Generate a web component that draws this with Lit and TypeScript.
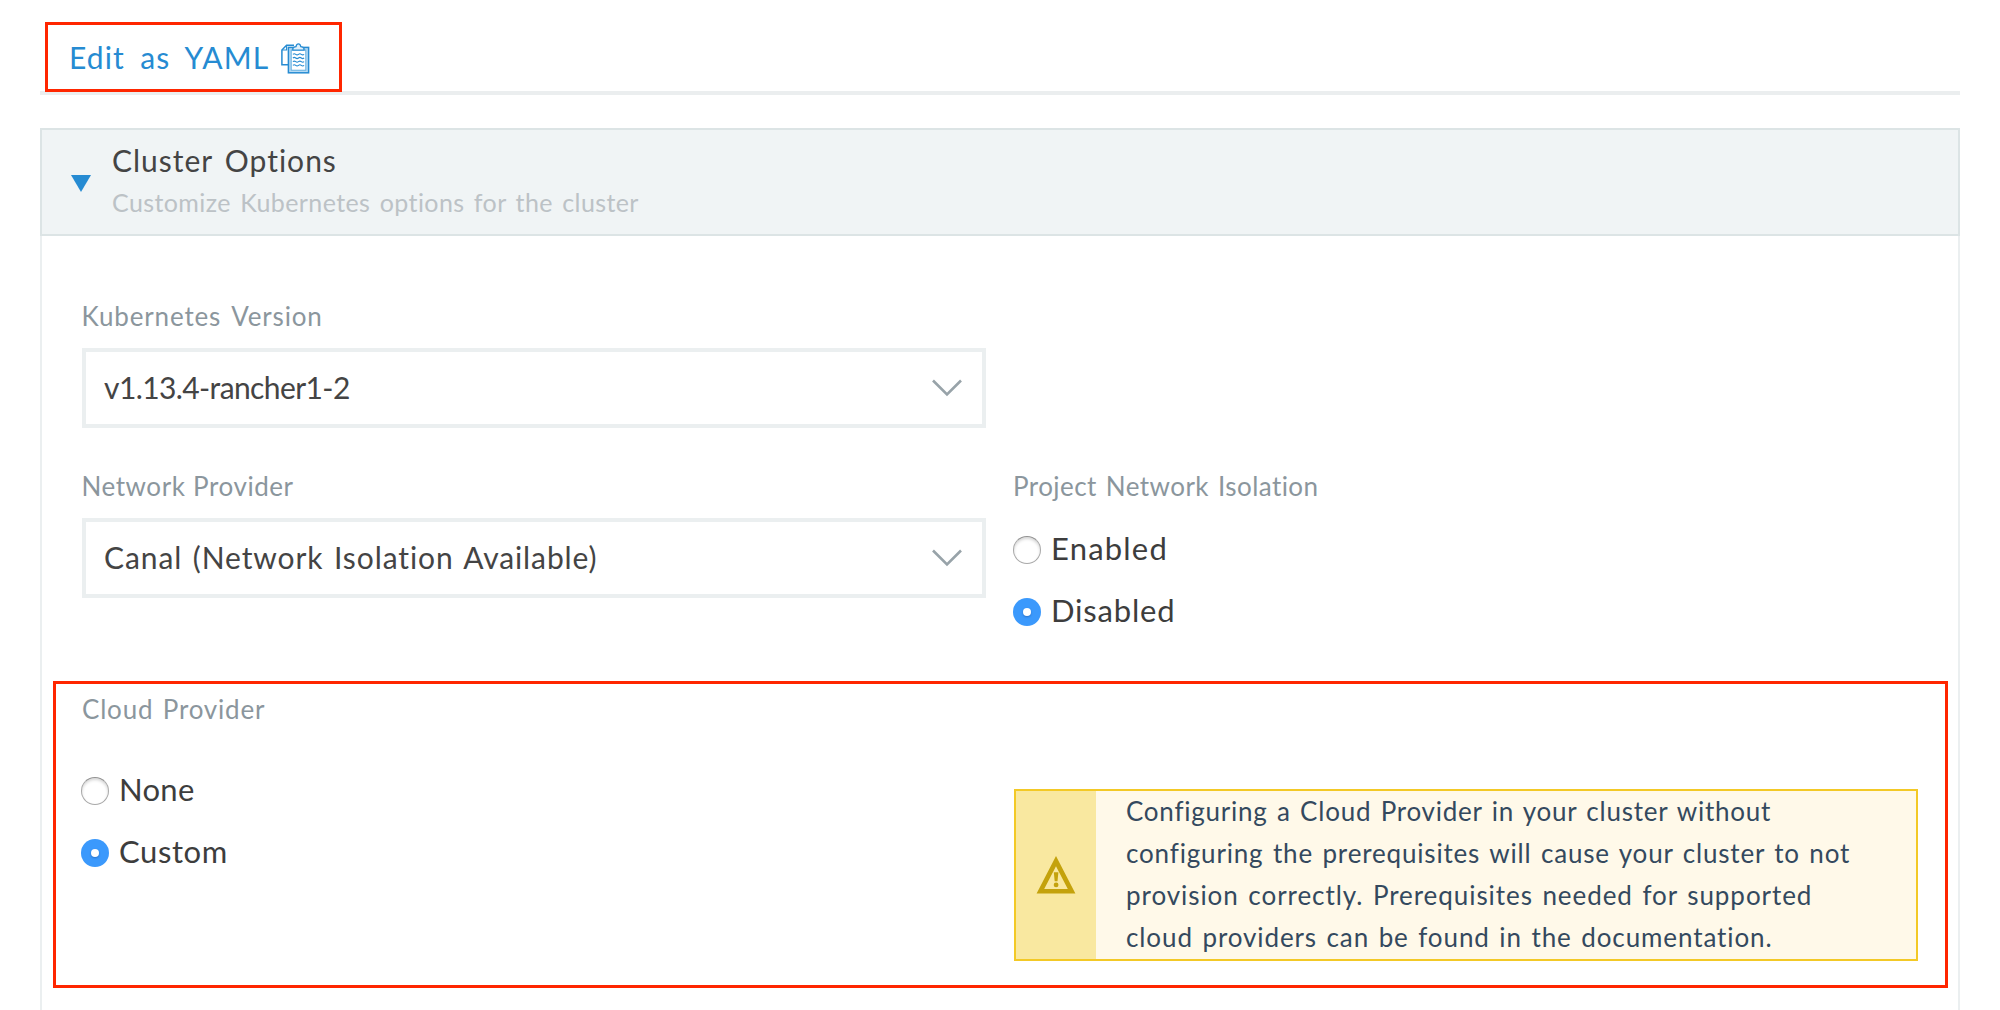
import { LitElement, html, css, svg } from "lit";
import { customElement, property } from "lit/decorators.js";

@customElement("select-box")
class SelectBox extends LitElement {
  static styles = css`
    :host { display: block; }
    .box {
      box-sizing: border-box; height: 80px; border: 4px solid #ebeff0;
      display: flex; align-items: center; justify-content: space-between;
      padding: 0 20px 0 18px; background: #fff;
      font-size: 30px; line-height: 42px; color: #444;
    }
    .value { padding-bottom: 3px; }
    svg { display: block; }
  `;
  render() {
    return html`<div class="box">
      <span class="value"><slot></slot></span>
      <svg width="30" height="18" viewBox="0 0 30 18">
        <path d="M1 1.5 L15 15.5 L29 1.5" fill="none" stroke="#98a3a9" stroke-width="2.6" />
      </svg>
    </div>`;
  }
}

@customElement("radio-option")
class RadioOption extends LitElement {
  @property({ type: Boolean }) checked = false;
  static styles = css`
    :host { display: flex; align-items: center; height: 62px; gap: 10px; font-size: 31px; line-height: 62px; color: #3d3d3d; }
    .text { padding-top: 1px; }
    .dot {
      box-sizing: border-box; width: 28px; height: 28px; border-radius: 50%; margin-top: 6px;
      border: 1px solid #a9a9a9; border-top-color: #929292; background: #fff;
      box-shadow: inset 0 2px 3px rgba(0, 0, 0, 0.16);
      display: flex; align-items: center; justify-content: center;
    }
    .dot.on { border: 0; background: #3b99fc; box-shadow: none; }
    .dot.on::after {
      content: ""; width: 8px; height: 8px; border-radius: 50%; background: #fff;
      box-shadow: 0 1px 2px rgba(0, 40, 110, 0.35);
    }
  `;
  render() {
    return html`<span class="dot ${this.checked ? "on" : ""}"></span><span class="text"><slot></slot></span>`;
  }
}

const clipboardIcon = svg`
  <svg class="clip" width="30" height="32" viewBox="0 0 30 32" fill="none" stroke="#268bd2">
    <path d="M7 21.8 H0.9 V7 L5.6 2.2 H13" stroke-width="1.5" />
    <path d="M1 7 H5.6 V2.4" stroke-width="1.1" />
    <rect x="7.4" y="4.4" width="20.2" height="25.4" fill="#b5daf4" stroke-width="1.5" />
    <rect x="10.2" y="7" width="14.6" height="20.2" fill="#fff" stroke="#5aa9de" stroke-width="0.9" />
    <path d="M11.8 7.2 V5.6 Q12.4 4 15 3.6 Q15.6 0.9 17.4 0.9 Q19.2 0.9 19.8 3.6 Q22.4 4 23 5.6 V7.2 Z" fill="#e3f1fb" stroke-width="1.3" />
    <path d="M11.9 11.3 q1.4 -1.2 2.8 0 t2.8 0 t2.8 0 t2.8 0 M11.9 15 q1.4 -1.2 2.8 0 t2.8 0 t2.8 0 t2.8 0 M11.9 18.7 q1.4 -1.2 2.8 0 t2.8 0 t2.8 0 t2.8 0 M11.9 22.4 q1.4 -1.2 2.8 0 t2.8 0 t2.8 0 t2.8 0" stroke-width="1.1" />
  </svg>`;

const warningIcon = svg`
  <svg width="40" height="38" viewBox="0 0 40 38">
    <path d="M20 0 L39.4 37.4 H0.6 Z M20 10.2 L8.2 33 H31.8 Z" fill="#c4a20c" fill-rule="evenodd" />
    <path d="M17.8 16.2 H22.4 L21.5 25.3 H18.7 Z" fill="#c4a20c" />
    <circle cx="20.1" cy="28.9" r="2.4" fill="#c4a20c" />
  </svg>`;

@customElement("app-root")
class AppRoot extends LitElement {
  static styles = css`
    :host {
      display: block; height: 1010px; overflow: hidden; background: #fff;
      font-family: Lato, "Open Sans", sans-serif; white-space: nowrap;
    }
    .page { display: flex; flex-direction: column; height: 1010px; padding: 0 40px; box-sizing: border-box; }
    .toolbar { flex: none; box-sizing: border-box; height: 95px; border-bottom: 4px solid #ebeeef; padding: 22px 0 0 5px; }
    .edit {
      box-sizing: border-box; width: 297px; height: 70px; border: 3px solid #ff2600;
      display: flex; align-items: center; gap: 12px; padding-left: 21px; position: relative;
      font-size: 30px; line-height: 42px; color: #268bd2;
    }
    .t-edit { letter-spacing: 1.1px; word-spacing: 6.6px; }
    .clip { display: block; margin-top: 4px; }
    .panel { flex: 1; display: flex; flex-direction: column; margin-top: 33px; min-height: 0; }
    .head {
      flex: none; box-sizing: border-box; height: 108px; background: #f0f4f5; border: 2px solid #dce4e5;
      display: flex; align-items: flex-start; padding: 9px 0 0 29px; gap: 21px;
    }
    .arrow { display: block; margin-top: 36px; }
    .title { font-size: 30px; line-height: 42px; color: #444; letter-spacing: 1px; word-spacing: 3.5px; }
    .sub { font-size: 25px; line-height: 42px; color: #bcc2c6; letter-spacing: 0.4px; word-spacing: 2.6px; }
    .body { flex: 1; border: solid #ebeff0; border-width: 0 2px; padding-top: 65px; }
    .form { display: grid; grid-template-columns: 904px 904px; column-gap: 27px; row-gap: 43px; padding-left: 40px; }
    .label { font-size: 26px; line-height: 30px; color: #8b969d; }
    .form select-box { margin-top: 17px; }
    .radios { margin-top: 15px; }
    .wide { grid-column: 1 / -1; width: 904px; }
    .cloud {
      box-sizing: border-box; width: 1895px; height: 307px; margin: 41px 0 0 11px;
      border: 3px solid #ff2600; padding: 10px 27px 0 25px;
    }
    .cols { display: grid; grid-template-columns: 933px 904px; margin-top: 33px; }
    .alert {
      box-sizing: border-box; height: 172px; margin-top: 32px; border: 2px solid #f3c926; background: #fff9e9;
      display: grid; grid-template-columns: 80px 1fr; font-size: 26px; line-height: 42px; color: #34495e;
    }
    .badge { background: #f9e8a0; display: flex; align-items: center; justify-content: center; }
    .msg { padding-left: 30px; margin-top: -1px; word-spacing: 2px; }
    .l1 { letter-spacing: 0.76px; }
    .l2 { letter-spacing: 0.83px; }
    .l3 { letter-spacing: 0.94px; }
    .l4 { letter-spacing: 0.9px; }
    .k-ver { letter-spacing: 0.85px; word-spacing: 3.5px; margin-left: -0.5px; }
    .k-net { letter-spacing: 0.55px; word-spacing: 0.5px; margin-left: -0.5px; }
    .k-iso { letter-spacing: 0.43px; word-spacing: 2px; }
    .k-cloud { letter-spacing: 0.8px; word-spacing: 2px; padding-left: 1px; }
    .v-ver { letter-spacing: -0.6px; }
    .v-net { letter-spacing: 0.9px; word-spacing: 2px; }
    .r-en { letter-spacing: 1.2px; }
    .r-dis { letter-spacing: 0.8px; }
    .r-none { letter-spacing: 0.3px; }
    .r-cus { letter-spacing: 0.6px; }
  `;
  render() {
    return html`<div class="page">
      <div class="toolbar">
        <a class="edit"><span class="t-edit">Edit as YAML</span>${clipboardIcon}</a>
      </div>
      <section class="panel">
        <header class="head">
          <svg class="arrow" width="20" height="17" viewBox="0 0 20 17"><path d="M0 0 H20 L10 17 Z" fill="#268bd2" /></svg>
          <div>
            <div class="title">Cluster Options</div>
            <div class="sub">Customize Kubernetes options for the cluster</div>
          </div>
        </header>
        <div class="body">
          <div class="form">
            <div class="wide">
              <div class="label k-ver">Kubernetes Version</div>
              <select-box class="v-ver">v1.13.4-rancher1-2</select-box>
            </div>
            <div>
              <div class="label k-net">Network Provider</div>
              <select-box class="v-net">Canal (Network Isolation Available)</select-box>
            </div>
            <div>
              <div class="label k-iso">Project Network Isolation</div>
              <div class="radios">
                <radio-option class="r-en">Enabled</radio-option>
                <radio-option class="r-dis" checked>Disabled</radio-option>
              </div>
            </div>
          </div>
          <div class="cloud">
            <div class="label k-cloud">Cloud Provider</div>
            <div class="cols">
              <div>
                <radio-option class="r-none">None</radio-option>
                <radio-option class="r-cus" checked>Custom</radio-option>
              </div>
              <div class="alert">
                <div class="badge">${warningIcon}</div>
                <div class="msg">
                  <div class="l1">Configuring a Cloud Provider in your cluster without</div>
                  <div class="l2">configuring the prerequisites will cause your cluster to not</div>
                  <div class="l3">provision correctly. Prerequisites needed for supported</div>
                  <div class="l4">cloud providers can be found in the documentation.</div>
                </div>
              </div>
            </div>
          </div>
        </div>
      </section>
    </div>`;
  }
}
